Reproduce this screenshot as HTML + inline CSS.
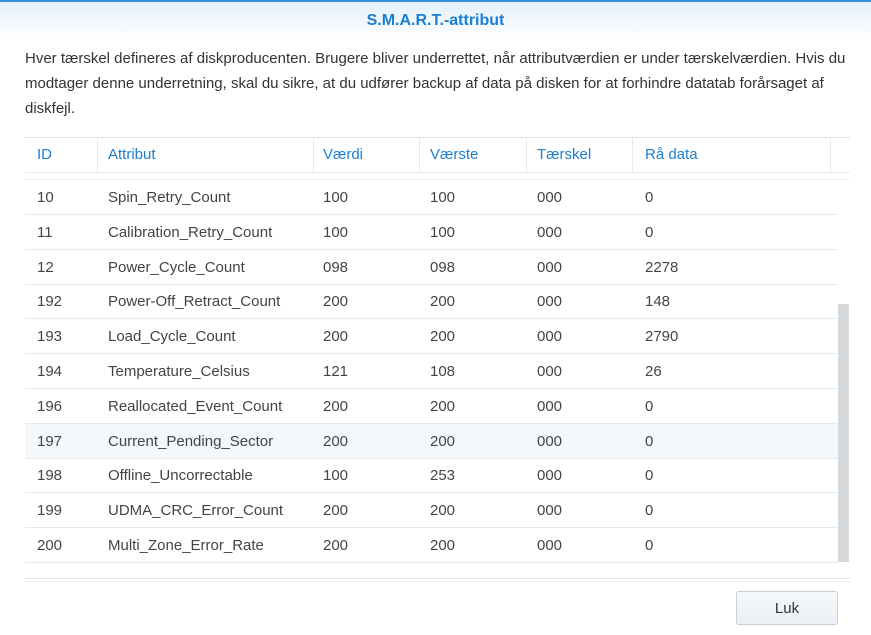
<!DOCTYPE html>
<html><head><style>
body{margin:0;width:871px;height:635px;background:#fff;font-family:"Liberation Sans",sans-serif;position:relative;overflow:hidden}
.hdr{position:absolute;left:0;top:0;width:871px;height:40px;border-top:2px solid #3b8fd6;box-sizing:border-box;background:linear-gradient(#e3f0fb,#fff)}
.title{position:absolute;top:12px;left:0;width:871px;text-align:center;color:#1b7fd2;font-weight:bold;font-size:16px}
.desc{position:absolute;left:25px;top:46px;width:830px;font-size:15px;line-height:25px;color:#333}
.th{position:absolute;top:137px;left:25px;width:825px;height:34px;border-top:1px solid #d9e6f1;border-bottom:1px solid #e8ecef}
.th span{position:absolute;top:8px;color:#1b7fd2;font-size:15px}
.th i{position:absolute;top:0;height:34px;border-left:1px solid #e6eaee}
.row{position:absolute;left:25px;width:813px;height:34px;border-bottom:1px solid #e6eaee;font-size:15px;color:#444}
.row span{position:absolute;top:9px}
.sb{position:absolute;left:838px;top:304px;width:11px;height:258px;background:#d6d9dc}
.foot{position:absolute;left:25px;top:578px;width:825px;height:2px;border-top:1px solid #dfe3e6;border-bottom:1px solid #eef0f2}
.btn{position:absolute;left:736px;top:591px;width:102px;height:34px;border:1px solid #c7d0d8;border-radius:3px;background:linear-gradient(#f7fafc,#e9eff4);font-size:15px;color:#333;text-align:center;line-height:33px;box-sizing:border-box}
</style></head><body>
<div class="hdr"></div>
<div class="title">S.M.A.R.T.-attribut</div>
<div class="desc">Hver tærskel defineres af diskproducenten. Brugere bliver underrettet, når attributværdien er under tærskelværdien. Hvis du modtager denne underretning, skal du sikre, at du udfører backup af data på disken for at forhindre datatab forårsaget af diskfejl.</div>
<div class="th">
<span style="left:12px">ID</span><i style="left:72px"></i>
<span style="left:83px">Attribut</span><i style="left:288px"></i>
<span style="left:298px">Værdi</span><i style="left:394px"></i>
<span style="left:405px">Værste</span><i style="left:501px"></i>
<span style="left:512px">Tærskel</span><i style="left:607px"></i>
<span style="left:620px">Rå data</span><i style="left:805px"></i>
</div>
<div style="position:absolute;left:25px;top:179px;width:825px;border-top:1px solid #eef0f2"></div>
<div id="rows"></div>
<div class="sb"></div>
<div class="foot"></div>
<div class="btn">Luk</div>
<script>
var d=[["10","Spin_Retry_Count","100","100","000","0"],["11","Calibration_Retry_Count","100","100","000","0"],["12","Power_Cycle_Count","098","098","000","2278"],["192","Power-Off_Retract_Count","200","200","000","148"],["193","Load_Cycle_Count","200","200","000","2790"],["194","Temperature_Celsius","121","108","000","26"],["196","Reallocated_Event_Count","200","200","000","0"],["197","Current_Pending_Sector","200","200","000","0"],["198","Offline_Uncorrectable","100","253","000","0"],["199","UDMA_CRC_Error_Count","200","200","000","0"],["200","Multi_Zone_Error_Rate","200","200","000","0"]];
var x=[12,83,298,405,512,620],h="";
d.forEach(function(r,i){h+='<div class="row" style="top:'+(180+i*34.8)+'px;'+(i==7?'background:#f3f8fd':'')+'">';r.forEach(function(c,j){h+='<span style="left:'+x[j]+'px">'+c+'</span>'});h+='</div>'});
document.getElementById('rows').innerHTML=h;
</script>
</body></html>
